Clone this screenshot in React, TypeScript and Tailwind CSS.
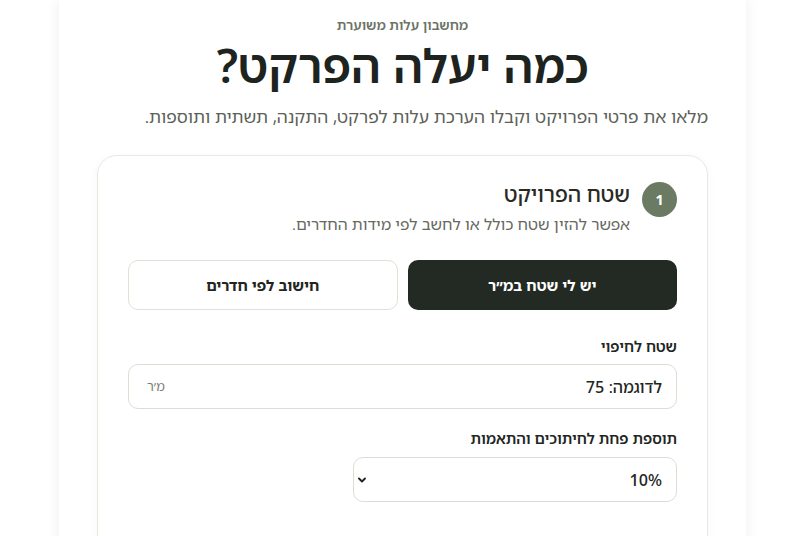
import React from "react";

export default function App() {
  return (
    <div dir="rtl" className="h-[536px] overflow-hidden bg-white font-['Noto_Sans_Hebrew','Noto_Sans',sans-serif] text-[#1f2620]">
      <div className="mr-[54px] h-[560px] w-[687px] bg-white px-[38px] pt-[15px] shadow-[0_0_14px_rgba(0,0,0,0.07)]">
        <p className="text-center text-[13.5px] leading-[20px] font-semibold text-[#6d7466]">מחשבון עלות משוערת</p>
        <h1 className="mt-[6px] text-center text-[46px] leading-[48px] font-semibold text-[#1d231e]">כמה יעלה הפרקט?</h1>
        <p className="mt-[15px] text-[17.5px] leading-[24px] text-[#5c6158]">מלאו את פרטי הפרויקט וקבלו הערכת עלות לפרקט, התקנה, תשתית ותוספות.</p>

        <div className="mt-[27px] min-h-[420px] rounded-t-[20px] border border-[#ece8e0] bg-white px-[30px] pt-[24px] shadow-[0_2px_10px_rgba(0,0,0,0.04)]">
          <div className="flex items-start gap-[12px]">
            <div className="mt-[2px] flex h-[35px] w-[35px] shrink-0 items-center justify-center rounded-full bg-[#6b7a62] text-[14px] font-bold text-white">1</div>
            <div>
              <h2 className="text-[21px] leading-[28px] font-medium text-[#2a2a24]">שטח הפרויקט</h2>
              <p className="mt-[6px] text-[15.8px] leading-[20px] text-[#66695f]">אפשר להזין שטח כולל או לחשב לפי מידות החדרים.</p>
            </div>
          </div>

          <div className="mt-[26px] grid grid-cols-2 gap-[10px]">
            <button className="h-[50px] rounded-[10px] bg-[#232923] text-[15px] font-bold text-white">יש לי שטח במ״ר</button>
            <button className="h-[50px] rounded-[10px] border border-[#e4e0d7] bg-white text-[15px] font-bold text-[#1f2620]">חישוב לפי חדרים</button>
          </div>

          <label className="mt-[26px] block text-[14.8px] leading-[20px] font-semibold text-[#22261f]">שטח לחיפוי</label>
          <div className="relative mt-[8px] flex h-[45px] items-center rounded-[10px] border border-[#e0dcd3] bg-white px-[14px]">
            <span className="text-[16px] font-medium text-[#22261f]">לדוגמה: 75</span>
            <span className="absolute left-[18px] top-1/2 -translate-y-1/2 text-[13px] text-[#7a7d74]">מ׳ר</span>
          </div>

          <label className="mt-[19px] block text-[14.8px] leading-[20px] font-semibold text-[#22261f]">תוספת פחת לחיתוכים והתאמות</label>
          <div className="relative mt-[9px] flex h-[45px] w-[324px] items-center rounded-[10px] border border-[#e0dcd3] bg-white px-[14px]">
            <span className="text-[16px] font-medium text-[#22261f]">10%</span>
            <svg className="absolute left-[3px] top-1/2 -translate-y-1/2" width="10" height="10" viewBox="0 0 10 10">
              <path d="M2 3.5 L5 6.5 L8 3.5" fill="none" stroke="#222" strokeWidth="1.9" strokeLinecap="round" strokeLinejoin="round" />
            </svg>
          </div>
        </div>
      </div>
    </div>
  );
}
